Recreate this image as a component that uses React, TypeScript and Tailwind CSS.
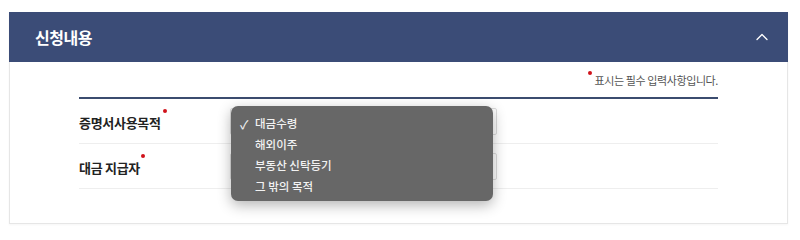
import { ChevronUp } from 'lucide-react'

const options = ['대금수령', '해외이주', '부동산 신탁등기', '그 밖의 목적']

function RequiredDot({ className = '' }: { className?: string }) {
  return <span className={`absolute w-[4px] h-[4px] rounded-full bg-[#d0121b] ${className}`} />
}

function FieldRow({ label, dotLeft }: { label: string; dotLeft: string }) {
  return (
    <div className="flex items-center h-[45px] border-b border-[#eeeeee]">
      <div className="w-[151px] relative">
        <span className="relative text-[13px] font-bold text-[#222] pt-[4px] inline-block tracking-[-0.3px]">
          {label}
          <RequiredDot className={`top-[0px] ${dotLeft}`} />
        </span>
      </div>
      <div className="w-[267px] h-[27px] border border-[#dddddd] rounded-[2px] bg-white flex items-center justify-end pr-[3px]">
        <svg width="8" height="8" viewBox="0 0 8 8" className="text-[#222]">
          <path d="M1 7 L7 1" stroke="currentColor" strokeWidth="1.4" />
        </svg>
      </div>
    </div>
  )
}

export default function App() {
  return (
    <div className="w-[800px] h-[238px] bg-white pt-[12px] pl-[9px] pr-[12px]" style={{ fontFamily: '"Noto Sans CJK KR", "Noto Sans", sans-serif' }}>
      <div className="relative border border-[#e6e6e6] border-t-0 h-[212px] shadow-[0_1px_2px_rgba(0,0,0,0.04)]">
        {/* 헤더 */}
        <div className="h-[50px] bg-[#3b4c77] flex items-center justify-between pl-[26px] pr-[16px] -mx-px">
          <h2 className="text-white text-[16px] font-bold tracking-[-0.5px]">신청내용</h2>
          <ChevronUp className="text-white w-[20px] h-[20px]" strokeWidth={1.6} />
        </div>

        {/* 본문 */}
        <div className="pl-[69px] pr-[69px]">
          <div className="flex justify-end items-center h-[35px] pt-[2px]">
            <span className="relative text-[11px] text-[#555] tracking-[-0.4px] pl-[7px]">
              <RequiredDot className="left-0 top-[-1px]" />
              표시는 필수 입력사항입니다.
            </span>
          </div>
          <div className="h-[2px] bg-[#3b4c6f]" />
          <FieldRow label="증명서사용목적" dotLeft="right-[-6px]" />
          <FieldRow label="대금 지급자" dotLeft="right-[-5px]" />
        </div>

        {/* 열린 선택 목록 */}
        <div className="absolute left-[221px] top-[94px] w-[262px] h-[95px] rounded-[7px] bg-[#676767] shadow-[0_4px_14px_rgba(0,0,0,0.3)] pt-[7px] text-[11.5px] text-[#f2f2f2] font-medium">
          {options.map((opt, i) => (
            <div key={opt} className="h-[21px] flex items-center">
              <span className="w-[24px] pl-[9px] text-[12px]">{i === 0 ? '✓' : ''}</span>
              <span>{opt}</span>
            </div>
          ))}
        </div>
      </div>
    </div>
  )
}
